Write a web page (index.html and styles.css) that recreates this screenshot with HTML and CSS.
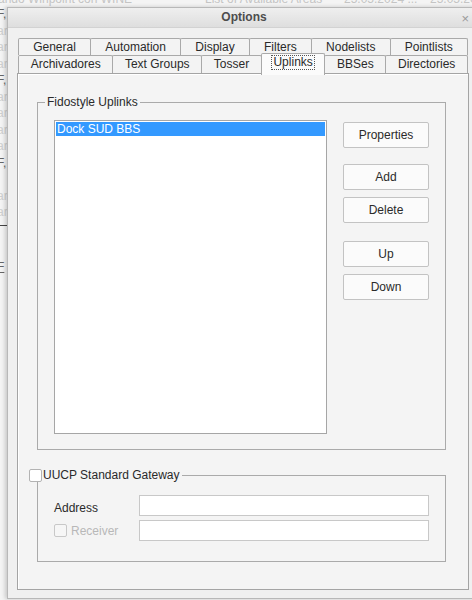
FILE: index.html
```html
<!DOCTYPE html>
<html>
<head>
    <title>Options</title>
    <link rel="stylesheet" href="styles.css">
</head>
<body>
    <!-- window behind the dialog -->
    <div class="backWindow">
        <div class="backTitle">
            <span class="backCol backCol1">ando Winpoint con WINE</span>
            <span class="backCol backCol2">List of Available Areas</span>
            <span class="backCol backCol3">25.05.2024 ...</span>
            <span class="backCol backCol4">25.05.2024</span>
        </div>
        <div class="backSide">
            <div class="backRow dark">F,</div>
            <div class="backRow">ar</div>
            <div class="backRow">ar</div>
            <div class="backRow">ar</div>
            <div class="backRow dark">F,</div>
            <div class="backRow">ar</div>
            <div class="backRow">ar</div>
            <div class="backRow">ar</div>
            <div class="backRow">ar</div>
            <div class="backRow dark">F,</div>
            <div class="backRow"></div>
            <div class="backRow">ar</div>
            <div class="backRow">ar</div>
            <div class="backRule"></div>
            <div class="backRow"></div>
            <div class="backRow"></div>
            <div class="backRow dark underlined">F</div>
        </div>
    </div>

    <div class="dialog">
        <div class="titleBar">
            <span class="titleText">Options</span>
            <span class="closeBtn">&times;</span>
        </div>

        <div class="dialogBody">
            <div class="tabRow">
                <div class="tab">General</div>
                <div class="tab">Automation</div>
                <div class="tab">Display</div>
                <div class="tab">Filters</div>
                <div class="tab">Nodelists</div>
                <div class="tab">Pointlists</div>
            </div>
            <div class="tabRow tabRowFront">
                <div class="tab">Archivadores</div>
                <div class="tab">Text Groups</div>
                <div class="tab">Tosser</div>
                <div class="tab tabSelected"><span class="focusRing">Uplinks</span></div>
                <div class="tab">BBSes</div>
                <div class="tab">Directories</div>
            </div>

            <div class="tabPanel">
                <fieldset class="groupBox uplinksGroup">
                    <legend>Fidostyle Uplinks</legend>
                    <div class="uplinksLayout">
                        <div class="listBox">
                            <div class="listItem listItemSelected">Dock SUD BBS</div>
                        </div>
                        <div class="buttonColumn">
                            <button class="winButton">Properties</button>
                            <button class="winButton gapLarge">Add</button>
                            <button class="winButton gapSmall">Delete</button>
                            <button class="winButton gapLarge">Up</button>
                            <button class="winButton gapSmall">Down</button>
                        </div>
                    </div>
                </fieldset>

                <fieldset class="groupBox uucpGroup">
                    <legend class="checkLegend"><span class="checkBox"></span>UUCP Standard Gateway</legend>
                    <div class="fieldRow">
                        <label class="fieldLabel" for="uucpAddress">Address</label>
                        <input class="textField" type="text" id="uucpAddress">
                    </div>
                    <div class="fieldRow">
                        <span class="fieldLabel labelDisabled"><span class="checkBox checkDisabled"></span>Receiver</span>
                        <input class="textField" type="text">
                    </div>
                </fieldset>
            </div>
        </div>
    </div>
</body>
</html>
```

FILE: styles.css
```css
body {
    margin: 0;
    width: 472px;
    height: 600px;
    overflow: hidden;
    position: relative;
    background-color: #eeeeee;
    font-family: "Liberation Sans", Arial, sans-serif;
    font-size: 12px;
    color: #2a2a2a;
}

/* background window */
.backWindow {
    position: absolute;
    left: 0;
    top: 0;
    width: 472px;
    height: 600px;
    background-color: #f4f4f4;
}

.backTitle {
    position: absolute;
    left: 0;
    top: -8px;
    width: 472px;
    height: 14px;
    line-height: 14px;
    color: #c4c4c4;
}

.backCol {
    position: absolute;
    top: 0;
    white-space: nowrap;
}

.backCol1 { left: -2px; }
.backCol2 { left: 205px; }
.backCol3 { left: 344px; }
.backCol4 { left: 430px; }

.backSide {
    position: absolute;
    left: -3px;
    top: 6px;
    width: 10px;
    color: #cfcfcf;
    line-height: 16.5px;
    overflow: hidden;
}

.backRow {
    height: 16.5px;
    white-space: nowrap;
}

.backRow.dark {
    color: #666;
}

.backRow.underlined {
    text-decoration: underline;
}

.backRule {
    height: 0;
    border-top: 1px solid #444;
    margin-top: 4px;
}

/* dialog window */
.dialog {
    position: absolute;
    left: 7px;
    top: 7px;
    width: 474px;
    height: 592px;
    box-sizing: border-box;
    background-color: #f0f0f0;
    border: 1px solid #b8b8b8;
    box-shadow: -2px 0 4px rgba(0, 0, 0, 0.18);
}

.titleBar {
    position: relative;
    height: 19px;
    line-height: 19px;
    text-align: center;
    background: linear-gradient(#efefef, #dedede);
    border-bottom: 1px solid #d2d2d2;
}

.titleText {
    font-weight: bold;
    color: #4d4d4d;
}

.closeBtn {
    position: absolute;
    right: 11px;
    top: 1px;
    color: #9a9a9a;
    font-size: 13px;
}

.dialogBody {
    padding: 10px 11px 8px 9px;
}

/* tabs */
.tabRow {
    display: flex;
    height: 17px;
    margin-left: 1px;
    margin-right: 1px;
}

.tabRowFront {
    height: 18px;
    position: relative;
    z-index: 1;
}

.tab {
    flex: 1 1 auto;
    margin-left: -1px;
    border: 1px solid #a9a9a9;
    border-bottom: none;
    border-radius: 2px 2px 0 0;
    background-color: #f3f3f3;
    text-align: center;
    line-height: 16px;
    white-space: nowrap;
}

.tab:first-child {
    margin-left: 0;
}

.tabSelected {
    background-color: #fbfbfb;
    margin-top: -2px;
    height: 21px;
    position: relative;
    z-index: 2;
}

.focusRing {
    display: inline-block;
    padding: 0 1px;
    margin: 1px -1px 0;
    line-height: 13px;
    outline: 1px dotted #555;
}

.tabPanel {
    height: 517px;
    box-sizing: border-box;
    border: 1px solid #a4a4a4;
    background-color: #f4f4f4;
    box-shadow: inset 1px 1px 0 #ffffff;
    padding: 21px 0 0 19px;
}

/* group boxes */
.groupBox {
    margin: 0;
    width: 409px;
    box-sizing: border-box;
    border: 1px solid #aaaaaa;
    padding: 0 16px 15px 16px;
    min-inline-size: 0;
}

.groupBox legend {
    padding: 0 2px;
    margin-left: -9px;
    line-height: 14px;
}

.uplinksLayout {
    display: flex;
    margin-top: 11px;
}

.listBox {
    width: 273px;
    height: 314px;
    box-sizing: border-box;
    background-color: #fff;
    border: 1px solid #a6a6a6;
}

.listItem {
    margin: 1px;
    height: 14px;
    line-height: 14px;
    padding-left: 1px;
}

.listItemSelected {
    background-color: #3399ff;
    color: #fff;
}

.buttonColumn {
    display: flex;
    flex-direction: column;
    margin-left: 16px;
    margin-top: 2px;
}

.winButton {
    width: 86px;
    height: 26px;
    background-color: #fbfbfb;
    border: 1px solid #c3c3c3;
    border-radius: 2px;
    font-family: "Liberation Sans", Arial, sans-serif;
    font-size: 12px;
    color: #2a2a2a;
    padding: 0;
}

.gapLarge {
    margin-top: 16px;
}

.gapSmall {
    margin-top: 7px;
}

.gapLarge + .gapSmall + .gapLarge {
    margin-top: 18px;
}

/* UUCP group */
.uucpGroup {
    margin-top: 18px;
    padding-bottom: 20px;
}

.groupBox .checkLegend {
    display: flex;
    align-items: center;
    margin-left: -25px;
    padding: 0 2px 0 0;
}

.checkBox {
    display: inline-block;
    width: 13px;
    height: 13px;
    box-sizing: border-box;
    border: 1px solid #b3b3b3;
    border-radius: 2px;
    background-color: #fff;
    margin-right: 1px;
}

.checkDisabled {
    border-color: #c8c8c8;
    background-color: #f6f6f6;
    margin-right: 4px;
    vertical-align: -2px;
}

.fieldRow {
    display: flex;
    align-items: center;
    margin-top: 4px;
}

.fieldRow:first-of-type {
    margin-top: 13px;
}

.fieldLabel {
    width: 85px;
    flex: none;
    padding-top: 4px;
}

.labelDisabled {
    color: #b8b8b8;
    padding-top: 0;
}

.textField {
    width: 291px;
    height: 21px;
    box-sizing: border-box;
    border: 1px solid #c8c8c8;
    background-color: #fff;
    margin: 0;
    padding: 0 3px;
    font-family: "Liberation Sans", Arial, sans-serif;
    font-size: 12px;
}
```
